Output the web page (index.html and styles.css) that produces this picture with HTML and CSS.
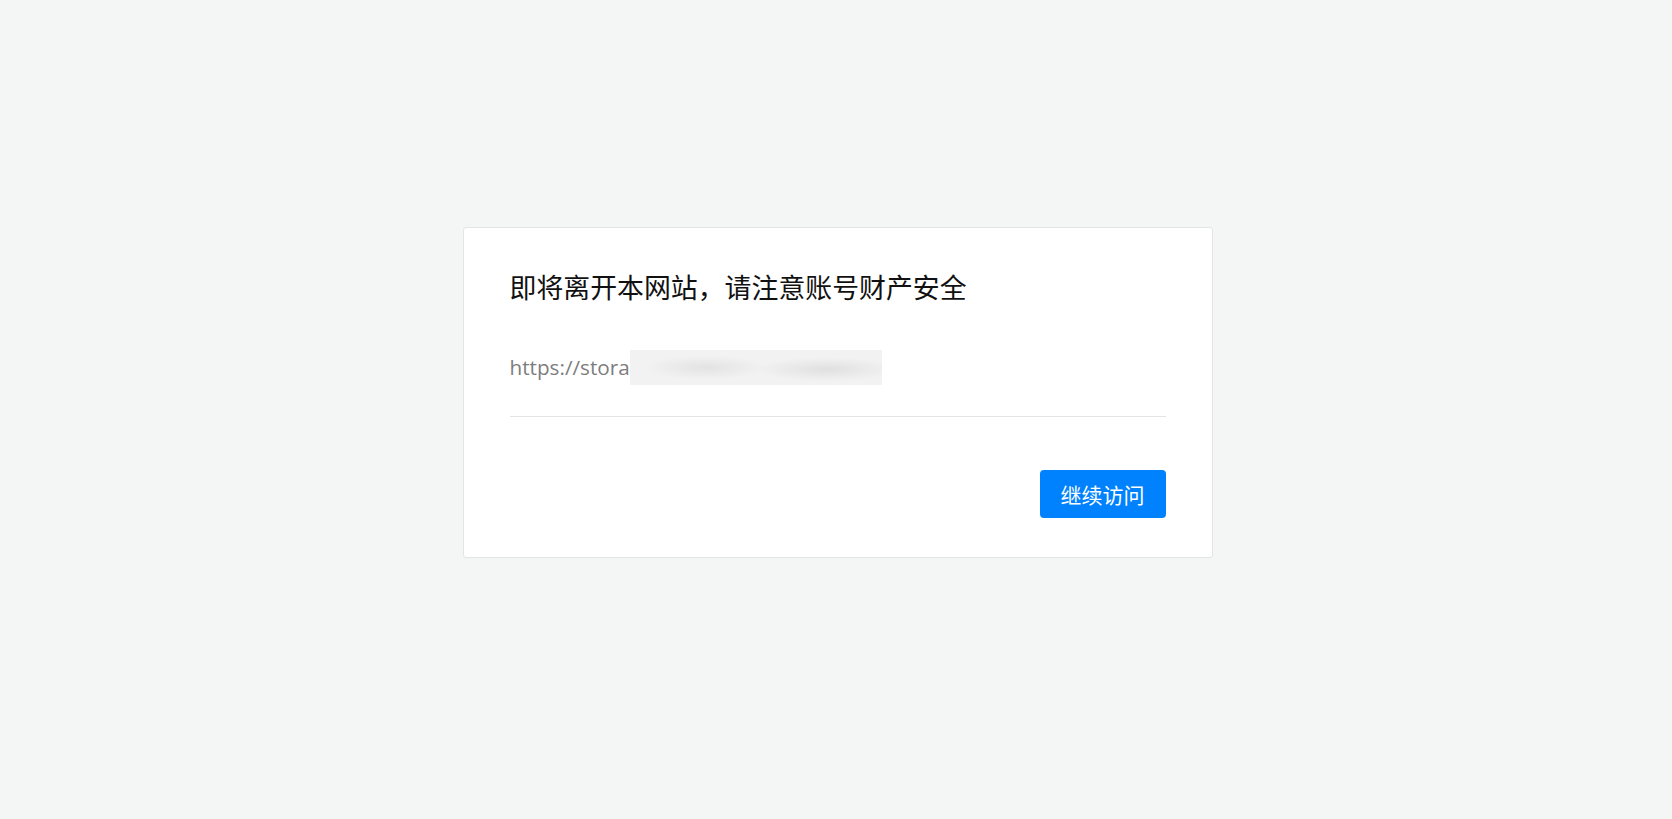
FILE: index.html
```html
<!DOCTYPE html>
<html lang="zh-CN">
<head>
<meta charset="utf-8">
<title>即将离开本网站</title>
<link rel="stylesheet" href="styles.css">
</head>
<body>
<main class="page">
  <section class="card">
    <h1 class="title">即将离开本网站，请注意账号财产安全</h1>
    <div class="link-row">
      <span class="link">https://stora</span><span class="mask"></span>
    </div>
    <hr class="divider">
    <div class="actions">
      <button class="btn-primary" type="button">继续访问</button>
    </div>
  </section>
</main>
</body>
</html>
```

FILE: styles.css
```css
* { box-sizing: border-box; }
html, body {
  margin: 0;
  padding: 0;
  height: 100%;
}
body {
  background: #f4f5f5;
  font-family: "Noto Sans CJK SC", "Open Sans", sans-serif;
}
.page {
  min-height: 100vh;
  display: flex;
  align-items: flex-start;
  justify-content: center;
  padding-top: 227px;
  padding-left: 3px;
}
.card {
  width: 750px;
  background: #ffffff;
  border: 1px solid #e3e4e4;
  border-radius: 3px;
  padding: 39px 46px 39px 46px;
}
.title {
  margin: 0;
  font-size: 26.9px;
  line-height: 40px;
  font-weight: 400;
  color: #111;
  letter-spacing: 0;
}
.link-row {
  margin-top: 43px;
  height: 35px;
  display: flex;
  align-items: center;
}
.link {
  font-family: "Open Sans", "Noto Sans", sans-serif;
  font-size: 20.7px;
  color: #7d7d7d;
  line-height: 35px;
}
.mask {
  width: 252px;
  height: 35px;
  background:
    radial-gradient(ellipse 60px 12px at 30% 50%, rgba(225,225,225,0.9), rgba(225,225,225,0)),
    radial-gradient(ellipse 70px 12px at 78% 55%, rgba(222,222,222,0.9), rgba(222,222,222,0)),
    #f2f2f2;
}
.divider {
  margin: 31px 0 0 0;
  border: 0;
  border-top: 1px solid #e4e4e4;
  height: 0;
}
.actions {
  margin-top: 53px;
  display: flex;
  justify-content: flex-end;
}
.btn-primary {
  height: 48px;
  width: 126px;
  border: 0;
  border-radius: 4px;
  background: #0082ff;
  color: #ffffff;
  font-family: "Noto Sans CJK SC", sans-serif;
  font-size: 21px;
  padding: 0;
  cursor: pointer;
}
```
